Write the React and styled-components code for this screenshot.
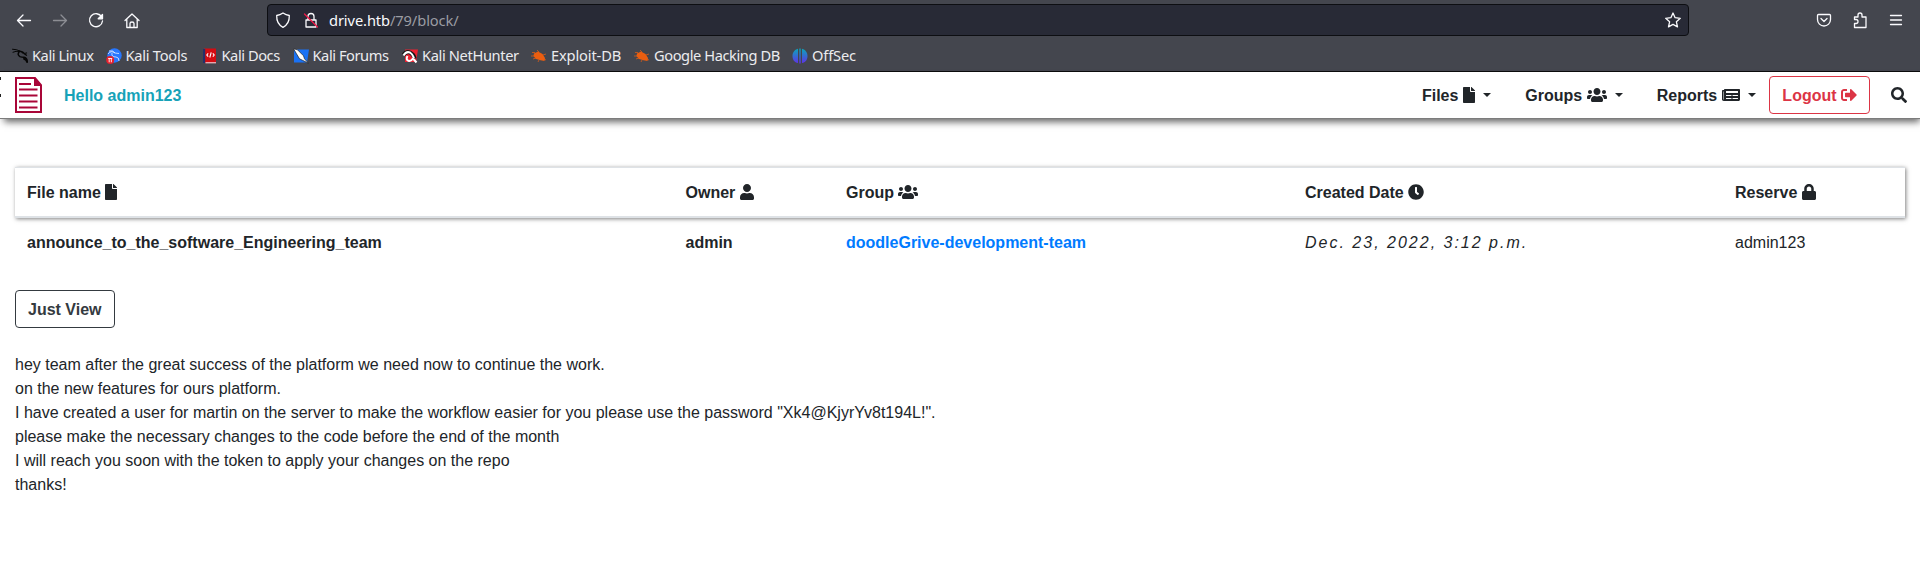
import React from 'react';
import styled, { createGlobalStyle } from 'styled-components';
import { FaFile, FaUsers, FaNewspaper, FaSignOutAlt, FaSearch, FaUser, FaClock, FaLock } from 'react-icons/fa';

const Global = createGlobalStyle`
  * { box-sizing: border-box; }
  body { margin: 0; background: #fff; color: #212529; overflow: hidden;
    font: 400 16px/24px "Liberation Sans", Arial, sans-serif; }
`;
const Page = styled.div`height: 572px; display: flex; flex-direction: column;`;
const Chrome = styled.div`
  height: 72px; flex: none; background: #44464e; border-bottom: 1px solid #0c0c0d;
  font-family: "Noto Sans", sans-serif; color: #fbfbfe;
`;
const Toolbar = styled.div`height: 40px; display: flex; align-items: center; padding: 0 14px 0 14px;`;
const ToolIcon = styled.svg`
  width: 20px; height: 20px; flex: none; display: block; fill: none; stroke: #fbfbfe;
  stroke-width: 1.3; stroke-linecap: round; stroke-linejoin: round;
  opacity: ${p => (p.$dim ? 0.4 : 1)};
  margin-left: ${p => p.$ml || 0}px;
`;
const NavTools = styled.div`display: flex; gap: 16px; width: 253px; flex: none;`;
const UrlBar = styled.div`
  width: 1422px; height: 32px; border: 1px solid #0d0e12; border-radius: 4px; background: #282a36;
  display: flex; align-items: center; padding: 0 5px; flex: none;
`;
const UrlText = styled.div`
  flex: 1; margin-left: 8px; font-size: 14.67px; letter-spacing: -.1px; line-height: 24px; color: #fbfbfe;
  span { color: #9b9ca3; }
`;
const MenuTools = styled.div`display: flex; gap: 16px; margin-left: auto;`;
const Bookmarks = styled.div`height: 31px; display: flex; align-items: center; padding-left: 12px;`;
const Bookmark = styled.div`
  display: flex; align-items: center; gap: 4px; width: ${p => p.$w}px; flex: none;
  font-size: 14.67px; line-height: 20px; white-space: nowrap; letter-spacing: ${p => p.$ls}px;
  svg { width: 16px; height: 16px; flex: none; }
`;
const Label = styled.span`margin-top: -2px; color: #ececef;`;

const Navbar = styled.header`
  height: 47px; flex: none; display: flex; align-items: center; position: relative;
  padding: 0 13px 0 15px; font-weight: 700; background: #fff;
  box-shadow: 2px 5px 7px -2px rgba(0,0,0,.6); border-bottom: 1px solid #7c7c7c;
`;
const DocLogo = styled.svg`width: 27px; height: 36px; flex: none;`;
const EdgeMarks = styled.svg`position: absolute; left: 0; top: 5px; width: 1px; height: 20px;`;
const Hello = styled.div`margin-left: 22px; padding-top: 2px; color: #17a2b8;`;
const NavLinks = styled.nav`margin-left: auto; display: flex; align-items: center;`;
const Caption = styled.span`padding-top: 2px;`;
const Glyph = styled.span`
  display: inline-flex; flex: none; margin-left: ${p => p.$ml ?? 4.45}px;
  svg { width: ${p => p.$w}px; height: 16px; }
`;
const NavLink = styled.div`
  display: flex; align-items: center; margin-right: ${p => p.$gap}px;
  &::after { content: ""; margin-left: 8.5px; border-top: 4.8px solid; border-left: 4.8px solid transparent; border-right: 4.8px solid transparent; height: 0; }
`;
const OutlineButton = styled.button`
  font: inherit; font-weight: 700; height: 38px; padding: 0 12px; background: #fff;
  display: flex; align-items: center; white-space: nowrap;
  color: ${p => p.$color}; border: 1px solid ${p => p.$color}; border-radius: 4px;
`;

const Content = styled.main`padding: 48px 15px 0;`;
const Row = styled.div`
  display: grid; grid-template-columns: 658.5px 160.5px 459px 430px 1fr; align-items: center;
  padding: 0 12px;
`;
const HeadRow = styled(Row)`
  height: 51px; font-weight: 700; border-top: 1px solid #dee2e6; border-bottom: 2px solid #dee2e6;
  box-shadow: 1px 1px 4px rgba(0,0,0,.5);
`;
const BodyRow = styled(Row)`height: 49px;`;
const HeadCell = styled.div`display: flex; align-items: center;`;
const Strong = styled.div`font-weight: 700; color: ${p => p.$color || 'inherit'};`;
const DateText = styled.em`letter-spacing: 2px;`;
const Actions = styled.div`margin: 23px 0 25px; display: flex;`;
const Message = styled.p`margin: 0; white-space: pre-line;`;

const Bug = () => (
  <svg viewBox="0 0 16 16" fill="#ec5e10">
    <path d="M3 5.5 7 3.5 11.5 6 14 10l-.5 3-4-.8L5 11 2.5 8z" />
    <path d="M1 4.5h3M6 2l2 2M0 8h4M2 11l3-1M12 7l3-1M8 12l-1 2M13 11l2 1" stroke="#ec5e10" strokeWidth=".7" />
  </svg>
);

const bookmarks = [
  { w: 93.5, ls: -0.45, text: 'Kali Linux', icon: <svg viewBox="0 0 16 16" fill="none" stroke="#060606" strokeLinecap="round"><path d="M.5 1.200Q5 1 8.500 3.500M1 4.200Q4 2.800 7 3.300" strokeWidth="1" /><path d="M7 3q4 .5 5 2.500l2.500 1.700M10 4.500q2 1.500 4.500.5" strokeWidth="1.300" /><path d="M7 4Q5 7 8 8.600q2 .8 4 .7 3.500.7 3.300 5.500-1-3.200-3.500-4" strokeWidth="1.500" /></svg> },
  { w: 96, ls: -0.26, text: 'Kali Tools', icon: <svg viewBox="0 0 16 16"><circle cx="8.500" cy="7.500" r="7.200" fill="#2777ff" /><path d="M2 6q3-4 7-1l4 .5M6 5q-1 4 4 4 3 0 3 4M3 3q4-1 6 2" fill="none" stroke="#e8f0ff" strokeWidth=".8" /><circle cx="4.200" cy="12" r="4" fill="#e5202d" /><path d="M2.200 10.500h4M3.200 10.500v3.800M5.300 10.500v3.800" stroke="#fff" strokeWidth=".9" /></svg> },
  { w: 91, ls: -0.45, text: 'Kali Docs', icon: <svg viewBox="0 0 16 16"><path d="M2 .5h12v14.500H2z" fill="#d40c12" /><path d="M1 1h2.200v14H1z" fill="#23306b" /><path d="M3.500 14h10.500v1.400H3.500z" fill="#e5a7ae" /><path d="M6.200 5.300 4.800 7l1.400 1.700M10.800 5.300 12.200 7l-1.400 1.700M9.200 4.300 7.800 9.500" fill="none" stroke="#fff" strokeWidth="1.100" /></svg> },
  { w: 109.5, ls: -0.45, text: 'Kali Forums', icon: <svg viewBox="0 0 16 16"><path d="M1 1.500h15l-2 13H1z" fill="#1a72f5" /><path d="m.5.8 4 1 6 6 1 3 4 4.500-6-3-3-1.500-3-5z" fill="#fff" stroke="#222" strokeWidth=".7" /></svg> },
  { w: 129, ls: -0.37, text: 'Kali NetHunter', icon: <svg viewBox="0 0 16 16"><path d="M3 1.500h13l-2 12.500H3z" fill="#ed2130" /><path d="M1.500 7Q4 3 8 4.500q4 2 4.500 6" fill="none" stroke="#151515" strokeWidth="4" /><path d="M1.500 7.500Q4 3 8 4.500q3 2 4 5.500M5.500 8q-2 3.500 1 4.800Q9 13.500 11 10.500l3.500 4" fill="none" stroke="#fff" strokeWidth="2" /></svg> },
  { w: 103, ls: -0.15, text: 'Exploit-DB', icon: <Bug /> },
  { w: 158, ls: -0.43, text: 'Google Hacking DB', icon: <Bug /> },
  { w: 80, ls: -0.17, text: 'OffSec', icon: <svg viewBox="0 0 16 16"><defs><linearGradient id="os" x1="0" y1="0" x2="0" y2="1"><stop offset="0" stopColor="#09a7ba" /><stop offset="1" stopColor="#6030e8" /></linearGradient></defs><path d="M6 .7v14.400C2.500 14.500.5 11.500.5 8S2.500 1.500 6 .7zM10 .7v14.400c3.500-.6 5.500-3.600 5.500-7.100S13.500 1.500 10 .7zM7.300.5h1.400v15H7.300z" fill="url(#os)" /></svg> },
];

export default function App() {
  return (
    <Page>
      <Global />
      <Chrome>
        <Toolbar>
          <NavTools>
            <ToolIcon viewBox="0 0 20 20"><path d="M16.500 10.500H3.500M9 5l-5.500 5.500L9 16" /></ToolIcon>
            <ToolIcon viewBox="0 0 20 20" $dim><path d="M3.500 10.500h13M11 5l5.500 5.500L11 16" /></ToolIcon>
            <ToolIcon viewBox="0 0 20 20"><path d="M15.700 7A6.500 6.500 0 1 0 16.500 11" /><path d="M16.500 4.500v4.300h-4.300z" fill="#fbfbfe" /></ToolIcon>
            <ToolIcon viewBox="0 0 20 20"><path d="M3 10.500 10 4l7 6.500M4.800 9v8.500h10.400V9M8 17.500v-4q0-1.500 2-1.500t2 1.500v4" /></ToolIcon>
          </NavTools>
          <UrlBar>
            <ToolIcon viewBox="0 0 20 20"><path d="M10 3q3 2 6.300 2.500C16.500 11 14.500 15 10 17.300 5.500 15 3.500 11 3.700 5.500 7 5 10 3 10 3z" /></ToolIcon>
            <ToolIcon viewBox="0 0 20 20" $ml={8}><path d="M5 10h10v7H5zM7 10V6.500a3 3 0 0 1 6 0V10" /><path d="m3.500 4 13 13" stroke="#ee1847" /></ToolIcon>
            <UrlText>drive.htb<span>/79/block/</span></UrlText>
            <ToolIcon viewBox="0 0 20 20"><path d="m10 3 2.100 4.700 5.200.6-3.900 3.500 1.100 5.100L10 14.400l-4.500 2.500 1.100-5.100-3.900-3.500 5.200-.6z" /></ToolIcon>
          </UrlBar>
          <MenuTools>
            <ToolIcon viewBox="0 0 20 20"><path d="M4.500 4.500h11q1 0 1 1v4a6.500 6.500 0 0 1-13 0v-4q0-1 1-1zM7 8.500l3 3 3-3" /></ToolIcon>
            <ToolIcon viewBox="0 0 20 20"><path d="M4.500 17.500v-4H6a2 2 0 0 0 0-4H4.500V7H8V5a2 2 0 0 1 4 0v2h4v10.500z" /></ToolIcon>
            <ToolIcon viewBox="0 0 20 20"><path d="M4.500 5.500h11M4.500 10h11M4.500 14.500h11" /></ToolIcon>
          </MenuTools>
        </Toolbar>
        <Bookmarks>
          {bookmarks.map(b => <Bookmark key={b.text} $w={b.w} $ls={b.ls}>{b.icon}<Label>{b.text}</Label></Bookmark>)}
        </Bookmarks>
      </Chrome>
      <Navbar>
        <EdgeMarks viewBox="0 0 1 20"><path d="M0 0h1v3H0zM0 17h1v3H0z" fill="#222" /></EdgeMarks>
        <DocLogo viewBox="0 0 27 36"><path d="M1 1h19l6 7v27H1z" fill="#fff" stroke="#a90638" strokeWidth="2" /><path d="M19 0l8 9h-8z" fill="#a90638" /><path d="M4 7h12M4 12.500h18.500M4 18.500h18.500M4 24.500h18.500M4 30.500h18.500" stroke="#a90638" strokeWidth="2" /></DocLogo>
        <Hello>Hello admin123</Hello>
        <NavLinks>
          <NavLink $gap={34}><Caption>Files</Caption><Glyph $w={12}><FaFile /></Glyph></NavLink>
          <NavLink $gap={33.5}><Caption>Groups</Caption><Glyph $w={20}><FaUsers /></Glyph></NavLink>
          <NavLink $gap={13.3}><Caption>Reports</Caption><Glyph $w={18}><FaNewspaper /></Glyph></NavLink>
          <OutlineButton $color="#dc3545"><Caption>Logout</Caption><Glyph $w={16}><FaSignOutAlt /></Glyph></OutlineButton>
          <Glyph $w={16} $ml={21}><FaSearch /></Glyph>
        </NavLinks>
      </Navbar>
      <Content>
        <HeadRow>
          <HeadCell><Caption>File name</Caption><Glyph $w={12}><FaFile /></Glyph></HeadCell>
          <HeadCell><Caption>Owner</Caption><Glyph $w={14}><FaUser /></Glyph></HeadCell>
          <HeadCell><Caption>Group</Caption><Glyph $w={20}><FaUsers /></Glyph></HeadCell>
          <HeadCell><Caption>Created Date</Caption><Glyph $w={16}><FaClock /></Glyph></HeadCell>
          <HeadCell><Caption>Reserve</Caption><Glyph $w={14}><FaLock /></Glyph></HeadCell>
        </HeadRow>
        <BodyRow>
          <Strong>announce_to_the_software_Engineering_team</Strong>
          <Strong>admin</Strong>
          <Strong $color="#007bff">doodleGrive-development-team</Strong>
          <DateText>Dec. 23, 2022, 3:12 p.m.</DateText>
          <div>admin123</div>
        </BodyRow>
        <Actions><OutlineButton $color="#343a40"><Caption>Just View</Caption></OutlineButton></Actions>
        <Message>{`hey team after the great success of the platform we need now to continue the work.
on the new features for ours platform.
I have created a user for martin on the server to make the workflow easier for you please use the password "Xk4@KjyrYv8t194L!".
please make the necessary changes to the code before the end of the month
I will reach you soon with the token to apply your changes on the repo
thanks!`}</Message>
      </Content>
    </Page>
  );
}
